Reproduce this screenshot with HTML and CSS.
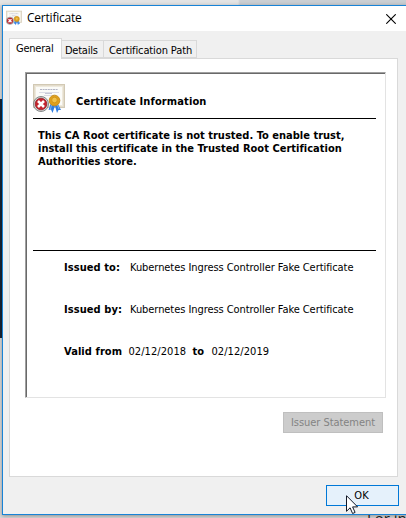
FILE: index.html
```html
<!DOCTYPE html>
<html lang="en">
<head>
<meta charset="utf-8">
<title>Certificate</title>
<link rel="stylesheet" href="styles.css">
</head>
<body>
<div class="behind-top"></div>
<div class="behind-left"></div>
<div class="behind-text">For in</div>
<svg width="0" height="0" class="defs">
  <symbol id="cert" viewBox="0 0 32 29">
    <rect x=".5" y=".5" width="31" height="23" fill="#e3dccb" stroke="#d2c9b4"/>
    <rect x="2.5" y="2.5" width="27" height="19" fill="#fbfbf8" stroke="#eee9dc"/>
    <path d="M7 5.5h18" stroke="#b3b5c4" stroke-dasharray="2 .6"/>
    <path d="M6 8.500h20M11 11.500h10" stroke="#dcdde6"/>
    <path d="M12 9.500h7" stroke="#c5c7d4"/>
    <path d="M17.500 20l-2 6 2.500-.5 1.500 3.500 2.500-7 2 7 1.500-3 2.500 0-3-6z" fill="#2f7de0"/>
    <path d="M18.500 21l-1 4M24.500 21l1.500 4" stroke="#73b4fa"/>
    <circle cx="21.500" cy="16.500" r="5.300" fill="#dfa01c" stroke="#c98f1c"/>
    <circle cx="21.500" cy="16" r="2.800" fill="#f0c24a" stroke="#cc9018" stroke-width=".8"/>
    <circle cx="8" cy="20" r="7.500" fill="#d0d2d2" stroke="#858989"/>
    <circle cx="8" cy="20" r="5.800" fill="#c5222c" stroke="#8e1b20" stroke-width=".7"/>
    <path d="M5 17l6 6M11 17l-6 6" stroke="#fff" stroke-width="2.600"/>
  </symbol>
</svg>
<main class="dialog">
  <header class="titlebar">
    <svg class="title-icon"><use href="#cert"/></svg>
    <span class="title">Certificate</span>
    <svg class="close" viewBox="0 0 10 10"><path d="M.3.300l9.400 9.400M9.700.300L.3 9.700" stroke="#000" stroke-width="1.100"/></svg>
  </header>
  <nav class="tabs">
    <div class="tab active">General</div>
    <div class="tab details">Details</div>
    <div class="tab path">Certification Path</div>
  </nav>
  <section class="pane">
    <div class="info">
      <div class="heading"><svg class="cert-icon"><use href="#cert"/></svg><h1>Certificate Information</h1></div>
      <div class="message">
        <div>This CA Root certificate is not trusted. To enable trust,</div>
        <div>install this certificate in the Trusted Root Certification</div>
        <div>Authorities store.</div>
      </div>
      <div class="row"><b class="k1">Issued to:</b><span class="name">Kubernetes Ingress Controller Fake Certificate</span></div>
      <div class="row"><b class="k1">Issued by:</b><span class="name">Kubernetes Ingress Controller Fake Certificate</span></div>
      <div class="row"><b class="k2">Valid from</b><span class="date">02/12/2018</span><b class="to">to</b><span class="date">02/12/2019</span></div>
    </div>
    <button class="issuer" disabled>Issuer Statement</button>
  </section>
  <footer><button class="ok">OK</button></footer>
</main>
<svg class="cursor" viewBox="0 0 12 19"><path d="M.5.700v15.600l3.600-3.500 2.500 5.700 2.500-1.100-2.500-5.500h5z" fill="#fff" stroke="#111827"/></svg>
</body>
</html>
```
FILE: styles.css
```css
* { box-sizing: border-box; }
body {
  margin: 0; width: 406px; height: 518px; overflow: hidden; position: relative;
  background: #d9d9d9; color: #000;
  font: 11px/13px "DejaVu Sans Condensed", "DejaVu Sans", sans-serif;
  font-stretch: condensed;
}
.defs { position: absolute; }
.behind-top { position: absolute; left: 0; top: 0; width: 406px; height: 5px; background: linear-gradient(90deg, #e4e4e4 238px, #cbcfd3 240px); }
.behind-left { position: absolute; left: 0; top: 99px; width: 2px; height: 239px; background: #182335; }
.behind-text { position: absolute; left: 367px; top: 511px; font: 15px/15px "Open Sans", sans-serif; color: #222; white-space: nowrap; }
.dialog {
  position: relative; margin-left: 2px; top: 5px; width: 410px; height: 510px;
  border: 1px solid #1883d7; background: #f0f0f0; box-shadow: 0 1px 4px rgba(0,0,0,.35);
}
.titlebar { height: 25px; background: #fff; display: flex; align-items: center; padding-left: 3px; }
.title-icon { width: 16px; height: 16px; margin-top: -1px; }
.title { font: 12px/16px "Open Sans", sans-serif; margin-left: 5px; margin-top: -1px; width: 358px; letter-spacing: -.22px; }
.close { width: 10px; height: 10px; flex: none; margin-left: 1px; }
.tabs { display: flex; align-items: flex-end; height: 27px; margin-left: 6px; }
.tab { height: 18px; border: 1px solid #d9d9d9; border-left: 0; white-space: nowrap; padding: 3px 0 0 3px; width: 42px; }
.tab.active { height: 21px; width: 53px; background: #fff; border: 1px solid #d9d9d9; border-bottom: 0; padding: 3px 0 0 6px; margin-bottom: -1px; position: relative; z-index: 1; letter-spacing: -.22px; }
.tab.details { letter-spacing: -.25px; }
.tab.path { width: 93px; padding-left: 5px; letter-spacing: -.12px; }
.pane { margin-left: 6px; width: 389px; height: 419px; background: #fff; border: 1px solid #d9d9d9; padding: 13px 0 0 15px; }
.info { width: 361px; height: 326px; border: 1px solid; border-color: #a0a0a0 #e3e3e3 #e3e3e3 #a0a0a0; box-shadow: inset 1px 1px #696969; padding: 11px 9px 0 7px; }
.heading { display: flex; height: 35px; border-bottom: 1px solid #000; }
.cert-icon { width: 32px; height: 29px; }
h1 { font: inherit; font-weight: bold; margin: 11px 0 0 11px; letter-spacing: .12px; }
.message { height: 132px; border-bottom: 1px solid #000; padding: 10px 0 0 5px; font-weight: bold; white-space: nowrap; margin-bottom: 10px; letter-spacing: .015px; }
.row { display: flex; height: 42px; padding-left: 31px; white-space: nowrap; }
.k1 { width: 66px; letter-spacing: .08px; }
.k2 { width: 64.5px; letter-spacing: .08px; }
.name { letter-spacing: -.065px; }
.to { width: 19px; }
.date { width: 64px; letter-spacing: .06px; }
.issuer { display: block; width: 100px; height: 21px; margin: 14px 0 0 258px; padding: 0; border: 1px solid #bfbfbf; background: #ccc; color: #838383; font: inherit; white-space: nowrap; letter-spacing: -.05px; }
footer { padding: 8px 0 0 323px; }
.ok { display: block; width: 73px; height: 21px; padding: 0 2px 0 0; border: 1px solid #0078d7; background: #e5f1fb; color: #000; font: inherit; }
.cursor { position: absolute; left: 346px; top: 495px; width: 12px; height: 19px; }
```
